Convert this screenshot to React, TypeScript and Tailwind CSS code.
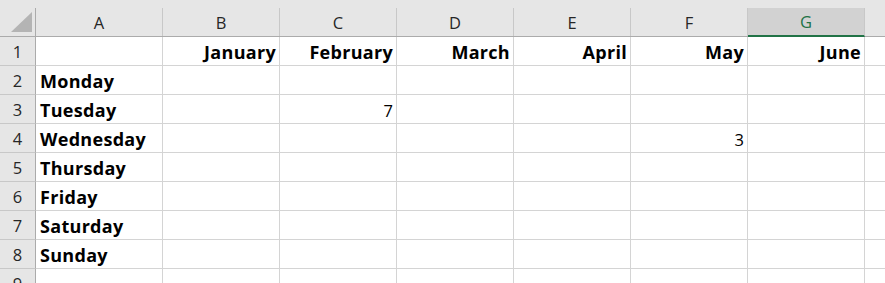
import React from "react";

const cols = ["A", "B", "C", "D", "E", "F", "G"];
const widths = ["w-[127px]", "w-[117px]", "w-[117px]", "w-[117px]", "w-[117px]", "w-[117px]", "w-[117px]"];

type Cell = { t: string; bold?: boolean; right?: boolean };

const data: Record<string, Cell> = {
  B1: { t: "January", bold: true, right: true },
  C1: { t: "February", bold: true, right: true },
  D1: { t: "March", bold: true, right: true },
  E1: { t: "April", bold: true, right: true },
  F1: { t: "May", bold: true, right: true },
  G1: { t: "June", bold: true, right: true },
  A2: { t: "Monday", bold: true },
  A3: { t: "Tuesday", bold: true },
  A4: { t: "Wednesday", bold: true },
  A5: { t: "Thursday", bold: true },
  A6: { t: "Friday", bold: true },
  A7: { t: "Saturday", bold: true },
  A8: { t: "Sunday", bold: true },
  C3: { t: "7", right: true },
  F4: { t: "3", right: true },
};

export default function App() {
  const rows = [1, 2, 3, 4, 5, 6, 7, 8, 9];
  return (
    <div
      className="w-[885px] h-[283px] overflow-hidden bg-white text-[16.5px] leading-[22px] text-black"
      style={{ fontFamily: "'Open Sans', Lato, sans-serif" }}
    >
      <div className="h-[8px] bg-[#e6e6e6]" />
      {/* column header row */}
      <div className="flex h-[29px] bg-[#e6e6e6] border-b border-[#ababab]">
        <div className="w-[36px] shrink-0 border-r border-[#ababab] relative">
          <svg width="36" height="28" className="absolute left-0 top-0">
            <polygon points="11,24 32,24 32,4" fill="#b4b4b4" />
          </svg>
        </div>
        {cols.map((c, i) => (
          <div
            key={c}
            className={`${widths[i]} shrink-0 border-r border-[#c8c8c8] flex items-end justify-center pb-[2px] ${
              c === "G" ? "bg-[#d2d2d2] text-[#217346] border-b-2 border-b-[#217346] -mb-px" : "text-[#262626]"
            }`}
          >
            {c}
          </div>
        ))}
        <div className="flex-1" />
      </div>
      {rows.map((r) => (
        <div key={r} className="flex h-[29px] border-b border-[#d4d4d4]">
          <div className="w-[36px] shrink-0 bg-[#e6e6e6] border-r border-[#ababab] flex items-end justify-center pb-[2px] text-[#262626] border-b border-b-[#c8c8c8] -mb-px">
            {r}
          </div>
          {cols.map((c, i) => {
            const cell = data[`${c}${r}`];
            return (
              <div
                key={c}
                className={`${widths[i]} shrink-0 border-r border-[#d4d4d4] flex items-end px-[3px] whitespace-nowrap ${
                  cell?.right ? "justify-end" : "justify-start pl-[4px]"
                } ${cell?.bold ? "font-bold text-[18px] tracking-[0.3px] pb-[2px]" : "pb-[1px]"}`}
              >
                {cell?.t ?? ""}
              </div>
            );
          })}
          <div className="flex-1" />
        </div>
      ))}
    </div>
  );
}
